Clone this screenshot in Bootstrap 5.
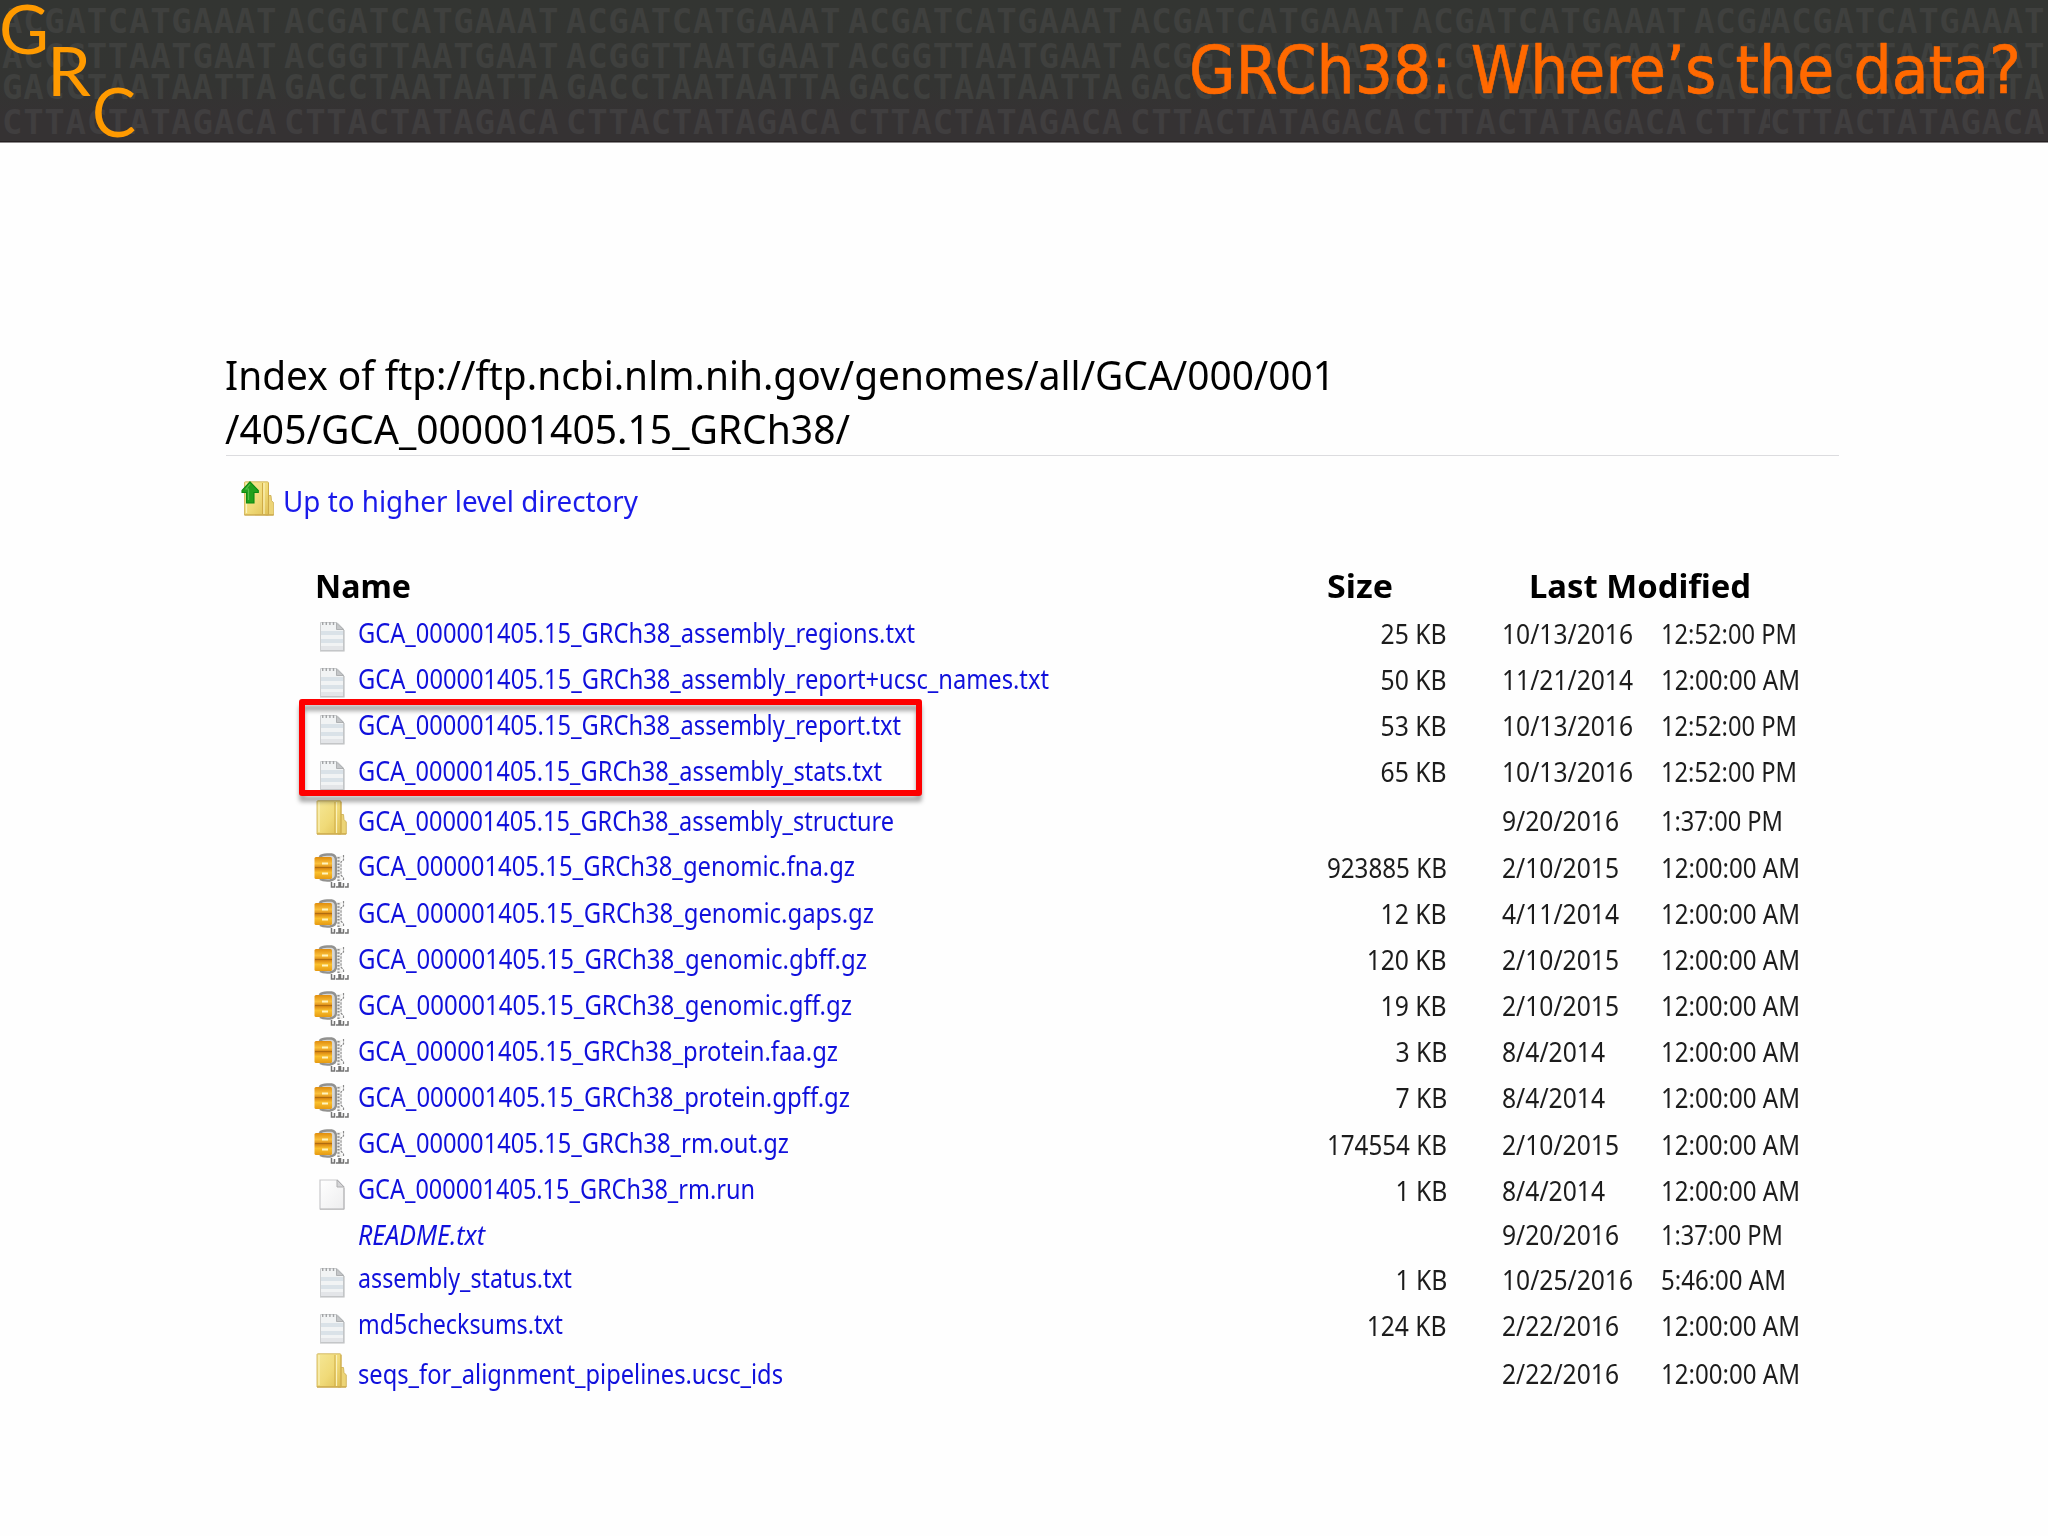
<!DOCTYPE html>
<html lang="en">
<head>
<meta charset="utf-8">
<title>GRCh38: Where’s the data?</title>
<link href="https://cdn.jsdelivr.net/npm/bootstrap@5.3.0/dist/css/bootstrap.min.css" rel="stylesheet">
<style>
body{background:#fefefe;color:#000;font-family:"Noto Sans","Open Sans",sans-serif;width:2048px;height:1536px;overflow:hidden}
.fit{display:inline-block;white-space:pre;transform-origin:0 50%}
.banner{height:143px;background:linear-gradient(#333532 0,#333432 60%,#353233 80%,#353233 100%);border-bottom:1px solid #8d8a8b;box-shadow:inset 0 -1px #241f21}
.bases{font:bold 34px/34px "DejaVu Sans Mono",monospace;color:#3f403e;left:0;top:0;right:0;padding:4px 0 0 2px}
.bases .strand{height:34px;white-space:nowrap}
.bases .strand.s1{height:34.5px}
.bases .strand.s2{height:31px}
.bases .strand.s3{height:35px}
.bases .strand.s4{color:#403e3f}
.bases .unit{flex:0 0 282px;letter-spacing:.7px}
.bases .cut{flex-basis:76px;overflow:hidden}
.logo{left:0;top:0}
.slide-title{font:66.5px/80px "DejaVu Sans",sans-serif;color:#ff6900;-webkit-text-stroke:.7px #ff6900;width:830px;margin-right:29px;padding-top:30px}
.listing{width:1613px;margin:205px 0 0 226px}
.path-title{font-size:40.5px;line-height:54px;font-weight:400;height:108px;border-bottom:1px solid #dcdcdf;margin:0}
.path-title .fit{margin-left:-1px}
a{color:#1010dc;text-decoration:none}
.up-row{margin:25px 0 42.7px 15px;height:40px;font-size:29.8px;line-height:40px}
.up-row svg{margin-right:8.5px}
.up-row a{color:#1a1aea}
.head-row{font-weight:700;font-size:32px;line-height:44px;height:44px;margin-bottom:2.4px;padding-left:89px}
.head-row .h-name{width:1012px}
.head-row .h-size{width:202px}
.entry{display:grid;grid-template-columns:43.5px 869.5px 220px 55px 159px 178px;align-items:end;height:46.1px;padding-left:88px;font-size:26.4px;line-height:36px;color:#1c1c1c}
.entry>*{margin-bottom:4px}
.entry .fname{margin-bottom:5.5px}
.entry .bytes{text-align:right}
.entry .bytes .fit{transform-origin:100% 50%}
.entry .day{grid-column:5}
.entry.dir{height:48.2px}
.entry.dir+.entry{height:47.3px}
.entry.dir .fname,.entry.plain .fname{margin-bottom:4px}
.entry.plain,.entry.after{height:44.5px}
.entry svg{display:block}
.i-txt{margin:0 0 3.8px 5px!important}
.i-dir{margin:0 0 7.5px 2px!important}
.i-zip{margin:0 0 2.2px 0!important}
.i-blank{margin:0 0 3px 4.5px!important}
.callout{left:299px;top:699px;width:623px;height:97px;border:6px solid #fe0000;border-radius:3px;filter:drop-shadow(0 6px 2px rgba(0,0,0,.33))}
</style>
</head>
<body>
<svg width="0" height="0" class="position-absolute">
<defs>
<linearGradient id="gd" x1="0" x2="1" y2="1"><stop offset="0" stop-color="#f5e797"/><stop offset=".55" stop-color="#f0da78"/><stop offset="1" stop-color="#dfc055"/></linearGradient>
<linearGradient id="gz" x2="0" y2="1"><stop offset="0" stop-color="#e08d0c"/><stop offset=".3" stop-color="#fbc13c"/><stop offset=".5" stop-color="#d98510"/><stop offset=".7" stop-color="#fbc02c"/><stop offset="1" stop-color="#e59a12"/></linearGradient>
<linearGradient id="gp" x2="1" y2="1"><stop offset="0" stop-color="#fff"/><stop offset="1" stop-color="#ededee"/></linearGradient>
<symbol id="txt" viewBox="0 0 26 31">
<path d="M1.500 1.500H18L24.500 8V29.500H1.500Z" fill="#f1f3f4" stroke="#cdcfd1"/>
<path d="M2 10h22v4H2zM2 18h22v4H2z" fill="#dae2e8"/><path d="M2 25h22v4H2z" fill="#e3e5e8"/>
<path d="M3 2.500h14" stroke="#a2a4a6" stroke-width="3" stroke-dasharray="1.400 2.200"/>
<path d="M17.500 2V8.500H24.500Z" fill="#c5c7c9" stroke="#a2a4a6" stroke-width=".8"/>
<path d="M1 30H25V9" fill="none" stroke="#bcbec0" stroke-width="1.200"/>
</symbol>
<symbol id="blank" viewBox="0 0 26 31">
<path d="M1 1H18.500L25 8V30H1Z" fill="url(#gp)" stroke="#c9c9cb" stroke-width="1.200"/>
<path d="M18 1V8H25Z" fill="#d5d5d7" stroke="#adadaf"/><path d="M1 30.200H25V9" fill="none" stroke="#b5b5b7"/>
</symbol>
<symbol id="dir" viewBox="0 0 31 35">
<path d="M22 14.500H27.500L28 19.500L30.300 22V34H22Z" fill="#ecd477" stroke="#cbac4e" stroke-width=".8"/>
<path d="M1 1.500Q1 .8 2 .8H24Q25 .8 25 2V34H1Z" fill="url(#gd)" stroke="#d3b65c" stroke-width=".9"/>
<path d="M19 2V33" stroke="#cfab45" stroke-width="1"/><path d="M20.500 2V33M3 2V32" stroke="#fbf2bc" stroke-width="1.200"/><path d="M25 2V33" stroke="#cdaa48" stroke-width="1"/>
<path d="M1 34H30" stroke="#c9a648" stroke-width="1.200"/>
</symbol>
<symbol id="zip" viewBox="0 0 35 35">
<path d="M6 5Q8 2 13 2H17Q21.500 3 21.500 7V22Q21.500 27.500 15 27.500Q9 27.500 6 25Z" fill="#d6d6d4"/>
<path d="M5.500 4Q8 1.500 13 1.500H17.500Q22 2.500 22 7V22Q22 26.500 16 27.500Q9 28 6 26" fill="none" stroke="#91918f" stroke-width="2.400"/>
<path d="M23 3H28Q26 7 26 12V21Q26 25 29 28H23Z" fill="#efefed"/>
<path d="M24.500 4V28" stroke="#8b8b8b" stroke-width="2.200" stroke-dasharray="1.600 1.600"/>
<path d="M29.500 2V7L27 9V22L29.500 25V28" fill="none" stroke="#8a8a8a" stroke-width="1.200" stroke-dasharray="2.500 1"/>
<path d="M17.500 29v5h3v-4M22 34h3v-5M26.500 29v5h3v-4M31 34h3v-4" fill="none" stroke="#747474" stroke-width="1.500"/>
<rect x=".5" y="4" width="17.500" height="22" rx="1.500" fill="url(#gz)"/>
<path d="M1 14.500H18" stroke="#b06c10" stroke-width="1.100"/><path d="M8 10.500h6M8 20.500h6" stroke="#fff3bd" stroke-width="2"/>
</symbol>
</defs>
</svg>

<header class="banner position-relative d-flex justify-content-end overflow-hidden">
<div class="bases position-absolute" aria-hidden="true">
<div class="strand s1 d-flex"><span class="unit">ACGATCATGAAAT</span><span class="unit">ACGATCATGAAAT</span><span class="unit">ACGATCATGAAAT</span><span class="unit">ACGATCATGAAAT</span><span class="unit">ACGATCATGAAAT</span><span class="unit">ACGATCATGAAAT</span><span class="unit cut">ACGA</span><span class="unit">ACGATCATGAAAT</span></div>
<div class="strand s2 d-flex"><span class="unit">ACGGTTAATGAAT</span><span class="unit">ACGGTTAATGAAT</span><span class="unit">ACGGTTAATGAAT</span><span class="unit">ACGGTTAATGAAT</span><span class="unit">ACGGTTAATGAAT</span><span class="unit">ACGGTTAATGAAT</span><span class="unit cut">ACGG</span><span class="unit">ACGGTTAATGAAT</span></div>
<div class="strand s3 d-flex"><span class="unit">GACCTAATAATTA</span><span class="unit">GACCTAATAATTA</span><span class="unit">GACCTAATAATTA</span><span class="unit">GACCTAATAATTA</span><span class="unit">GACCTAATAATTA</span><span class="unit">GACCTAATAATTA</span><span class="unit cut">GACC</span><span class="unit">GACCTAATAATTA</span></div>
<div class="strand s4 d-flex"><span class="unit">CTTACTATAGACA</span><span class="unit">CTTACTATAGACA</span><span class="unit">CTTACTATAGACA</span><span class="unit">CTTACTATAGACA</span><span class="unit">CTTACTATAGACA</span><span class="unit">CTTACTATAGACA</span><span class="unit cut">CTTA</span><span class="unit">CTTACTATAGACA</span></div>
</div>
<svg class="logo position-absolute" width="140" height="142" font-family="Lato, sans-serif" font-size="67" fill="#ff9a00">
<text x="-1" y="53.500" textLength="50" lengthAdjust="spacingAndGlyphs">G</text>
<text x="47" y="96" textLength="44" lengthAdjust="spacingAndGlyphs">R</text>
<text x="92" y="136.500" textLength="44" lengthAdjust="spacingAndGlyphs">C</text>
</svg>
<h1 class="slide-title position-relative mb-0"><span class="fit" data-w="832">GRCh38: Where’s the data?</span></h1>
</header>

<main class="listing">
<h2 class="path-title"><span class="fit" data-w="1110">Index of ftp://ftp.ncbi.nlm.nih.gov/genomes/all/GCA/000/001</span><br><span class="fit" data-w="625">/405/GCA_000001405.15_GRCh38/</span></h2>
<div class="up-row d-flex align-items-start">
<svg width="33" height="36" viewBox="0 0 33 36"><g transform="translate(2.500 0)"><use href="#dir" width="31" height="35"/></g><path d="M9 .8L17.300 9.500V11.500H13V22H5.500V11.500H1V9.500Z" fill="#22a01c" stroke="#0d8a12" stroke-width="1.100"/><path d="M9 3L5 8H7.500V19" fill="none" stroke="#55bd48" stroke-width="1.200"/></svg>
<a href="#"><span class="fit" data-w="355">Up to higher level directory</span></a>
</div>
<div class="head-row d-flex"><div class="h-name"><span class="fit" data-w="96">Name</span></div><div class="h-size"><span class="fit" data-w="66">Size</span></div><div><span class="fit" data-w="222">Last Modified</span></div></div>

<div class="entry"><svg class="i-txt" width="26" height="31"><use href="#txt"/></svg><a class="fname" href="#"><span class="fit" data-w="557">GCA_000001405.15_GRCh38_assembly_regions.txt</span></a><div class="bytes"><span class="fit" data-w="66">25 KB</span></div><div class="day"><span class="fit" data-w="131">10/13/2016</span></div><div><span class="fit" data-w="136">12:52:00 PM</span></div></div>
<div class="entry"><svg class="i-txt" width="26" height="31"><use href="#txt"/></svg><a class="fname" href="#"><span class="fit" data-w="691">GCA_000001405.15_GRCh38_assembly_report+ucsc_names.txt</span></a><div class="bytes"><span class="fit" data-w="66">50 KB</span></div><div class="day"><span class="fit" data-w="131">11/21/2014</span></div><div><span class="fit" data-w="139">12:00:00 AM</span></div></div>
<div class="entry"><svg class="i-txt" width="26" height="31"><use href="#txt"/></svg><a class="fname" href="#"><span class="fit" data-w="543">GCA_000001405.15_GRCh38_assembly_report.txt</span></a><div class="bytes"><span class="fit" data-w="66">53 KB</span></div><div class="day"><span class="fit" data-w="131">10/13/2016</span></div><div><span class="fit" data-w="136">12:52:00 PM</span></div></div>
<div class="entry"><svg class="i-txt" width="26" height="31"><use href="#txt"/></svg><a class="fname" href="#"><span class="fit" data-w="524">GCA_000001405.15_GRCh38_assembly_stats.txt</span></a><div class="bytes"><span class="fit" data-w="66">65 KB</span></div><div class="day"><span class="fit" data-w="131">10/13/2016</span></div><div><span class="fit" data-w="136">12:52:00 PM</span></div></div>
<div class="entry dir"><svg class="i-dir" width="31" height="35"><use href="#dir"/></svg><a class="fname" href="#"><span class="fit" data-w="536">GCA_000001405.15_GRCh38_assembly_structure</span></a><div class="day"><span class="fit" data-w="117">9/20/2016</span></div><div><span class="fit" data-w="122">1:37:00 PM</span></div></div>
<div class="entry"><svg class="i-zip" width="35" height="35"><use href="#zip"/></svg><a class="fname" href="#"><span class="fit" data-w="497">GCA_000001405.15_GRCh38_genomic.fna.gz</span></a><div class="bytes"><span class="fit" data-w="120">923885 KB</span></div><div class="day"><span class="fit" data-w="117">2/10/2015</span></div><div><span class="fit" data-w="139">12:00:00 AM</span></div></div>
<div class="entry"><svg class="i-zip" width="35" height="35"><use href="#zip"/></svg><a class="fname" href="#"><span class="fit" data-w="516">GCA_000001405.15_GRCh38_genomic.gaps.gz</span></a><div class="bytes"><span class="fit" data-w="66">12 KB</span></div><div class="day"><span class="fit" data-w="117">4/11/2014</span></div><div><span class="fit" data-w="139">12:00:00 AM</span></div></div>
<div class="entry"><svg class="i-zip" width="35" height="35"><use href="#zip"/></svg><a class="fname" href="#"><span class="fit" data-w="509">GCA_000001405.15_GRCh38_genomic.gbff.gz</span></a><div class="bytes"><span class="fit" data-w="80">120 KB</span></div><div class="day"><span class="fit" data-w="117">2/10/2015</span></div><div><span class="fit" data-w="139">12:00:00 AM</span></div></div>
<div class="entry"><svg class="i-zip" width="35" height="35"><use href="#zip"/></svg><a class="fname" href="#"><span class="fit" data-w="494">GCA_000001405.15_GRCh38_genomic.gff.gz</span></a><div class="bytes"><span class="fit" data-w="66">19 KB</span></div><div class="day"><span class="fit" data-w="117">2/10/2015</span></div><div><span class="fit" data-w="139">12:00:00 AM</span></div></div>
<div class="entry"><svg class="i-zip" width="35" height="35"><use href="#zip"/></svg><a class="fname" href="#"><span class="fit" data-w="480">GCA_000001405.15_GRCh38_protein.faa.gz</span></a><div class="bytes"><span class="fit" data-w="52">3 KB</span></div><div class="day"><span class="fit" data-w="103">8/4/2014</span></div><div><span class="fit" data-w="139">12:00:00 AM</span></div></div>
<div class="entry"><svg class="i-zip" width="35" height="35"><use href="#zip"/></svg><a class="fname" href="#"><span class="fit" data-w="492">GCA_000001405.15_GRCh38_protein.gpff.gz</span></a><div class="bytes"><span class="fit" data-w="52">7 KB</span></div><div class="day"><span class="fit" data-w="103">8/4/2014</span></div><div><span class="fit" data-w="139">12:00:00 AM</span></div></div>
<div class="entry"><svg class="i-zip" width="35" height="35"><use href="#zip"/></svg><a class="fname" href="#"><span class="fit" data-w="431">GCA_000001405.15_GRCh38_rm.out.gz</span></a><div class="bytes"><span class="fit" data-w="120">174554 KB</span></div><div class="day"><span class="fit" data-w="117">2/10/2015</span></div><div><span class="fit" data-w="139">12:00:00 AM</span></div></div>
<div class="entry"><svg class="i-blank" width="26" height="31"><use href="#blank"/></svg><a class="fname" href="#"><span class="fit" data-w="397">GCA_000001405.15_GRCh38_rm.run</span></a><div class="bytes"><span class="fit" data-w="52">1 KB</span></div><div class="day"><span class="fit" data-w="103">8/4/2014</span></div><div><span class="fit" data-w="139">12:00:00 AM</span></div></div>
<div class="entry plain"><span></span><a class="fname fst-italic" href="#"><span class="fit" data-w="127">README.txt</span></a><div class="day"><span class="fit" data-w="117">9/20/2016</span></div><div><span class="fit" data-w="122">1:37:00 PM</span></div></div>
<div class="entry after"><svg class="i-txt" width="26" height="31"><use href="#txt"/></svg><a class="fname" href="#"><span class="fit" data-w="214">assembly_status.txt</span></a><div class="bytes"><span class="fit" data-w="52">1 KB</span></div><div class="day"><span class="fit" data-w="131">10/25/2016</span></div><div><span class="fit" data-w="125">5:46:00 AM</span></div></div>
<div class="entry"><svg class="i-txt" width="26" height="31"><use href="#txt"/></svg><a class="fname" href="#"><span class="fit" data-w="205">md5checksums.txt</span></a><div class="bytes"><span class="fit" data-w="80">124 KB</span></div><div class="day"><span class="fit" data-w="117">2/22/2016</span></div><div><span class="fit" data-w="139">12:00:00 AM</span></div></div>
<div class="entry dir"><svg class="i-dir" width="31" height="35"><use href="#dir"/></svg><a class="fname" href="#"><span class="fit" data-w="425">seqs_for_alignment_pipelines.ucsc_ids</span></a><div class="day"><span class="fit" data-w="117">2/22/2016</span></div><div><span class="fit" data-w="139">12:00:00 AM</span></div></div>
</main>
<div class="callout position-absolute"></div>

<script src="https://cdn.jsdelivr.net/npm/bootstrap@5.3.0/dist/js/bootstrap.bundle.min.js"></script>
<script>
document.querySelectorAll('.fit').forEach(function (el) {
  el.style.transform = 'scaleX(' + (el.dataset.w / el.getBoundingClientRect().width) + ')';
});
</script>
</body>
</html>
